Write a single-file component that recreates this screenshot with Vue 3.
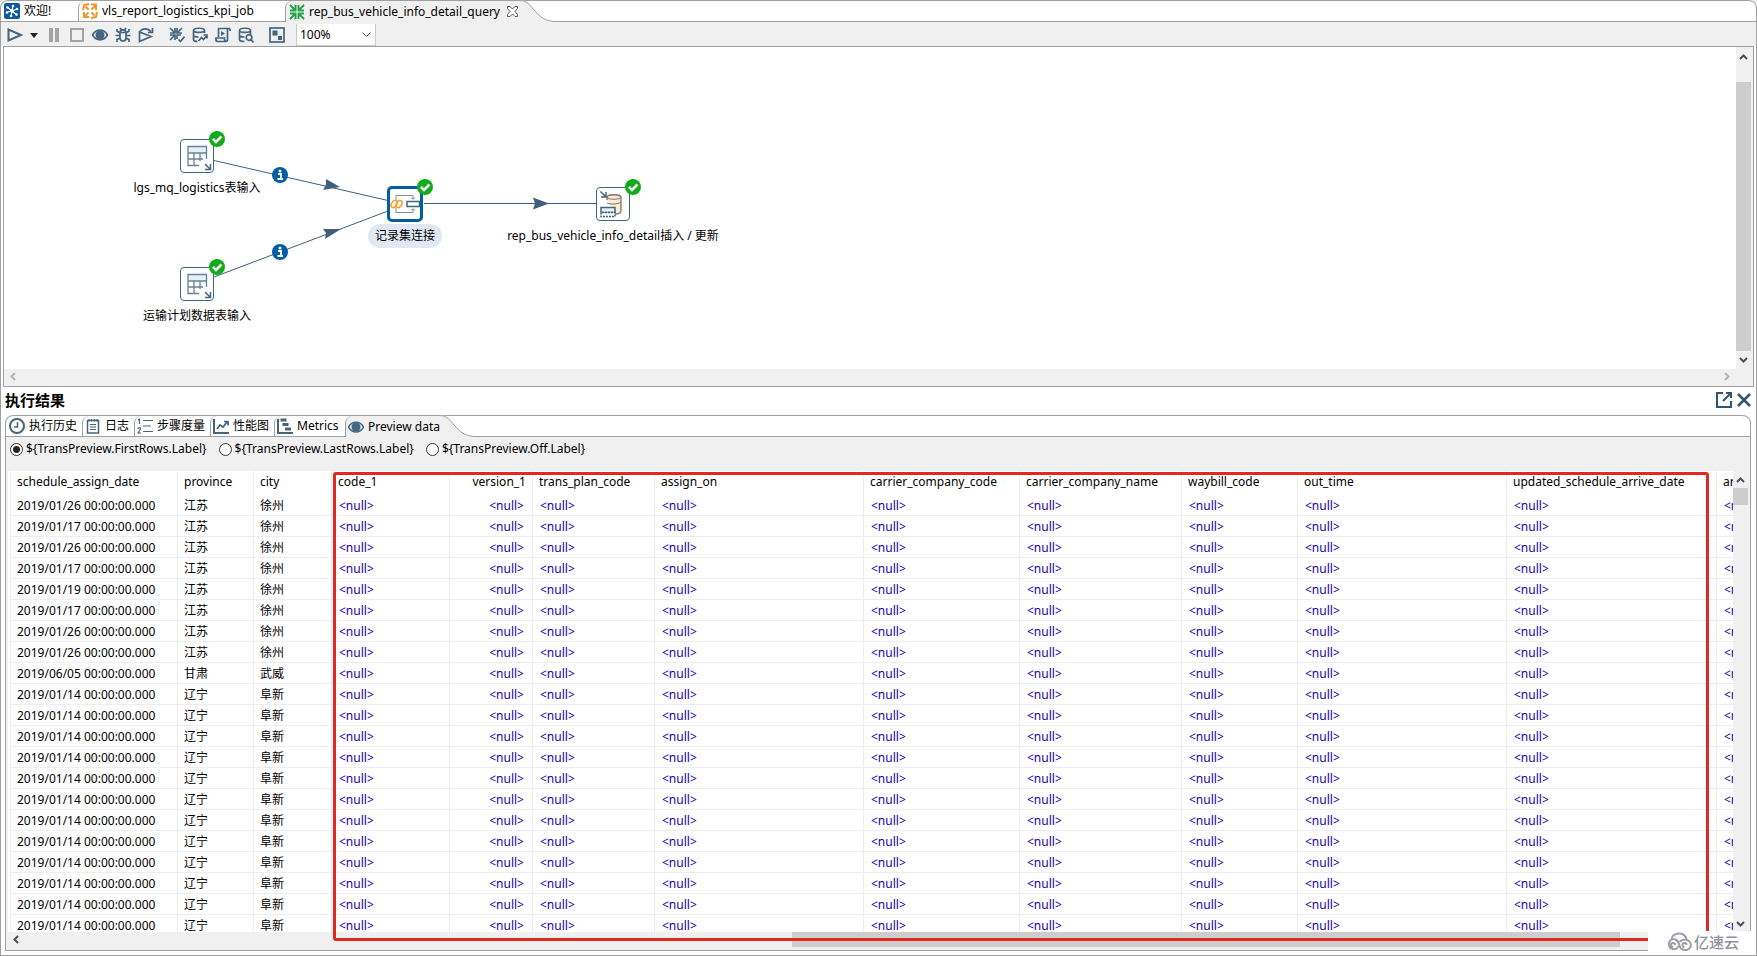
<script setup>
import { ref } from 'vue'

const zoomLevel = ref('100%')
const sampling = ref('first')

const tools = [
  { id: 'pause', label: 'Pause' },
  { id: 'stop', label: 'Stop' },
  { id: 'eye', label: 'Preview' },
  { id: 'bug', label: 'Debug' },
  { id: 'replay', label: 'Replay' },
  { id: 'verify', label: 'Verify', gap: true },
  { id: 'impact', label: 'Impact' },
  { id: 'sql', label: 'SQL' },
  { id: 'explore', label: 'Explore database' },
  { id: 'results', label: 'Show results', gap: true }
]

const nodes = [
  { id: 'a', kind: 'table', x: 176, y: 92, label: 'lgs_mq_logistics表输入' },
  { id: 'b', kind: 'table', x: 176, y: 220, label: '运输计划数据表输入' },
  { id: 'c', kind: 'merge', x: 384, y: 140, label: '记录集连接', selected: true },
  { id: 'd', kind: 'upsert', x: 592, y: 140, label: 'rep_bus_vehicle_info_detail插入 / 更新' }
]

const resultTabs = [
  { id: 'history', label: '执行历史' },
  { id: 'log', label: '日志' },
  { id: 'steps', label: '步骤度量' },
  { id: 'perf', label: '性能图' },
  { id: 'metrics', label: 'Metrics' }
]

const samplings = [
  { id: 'first', label: '${TransPreview.FirstRows.Label}' },
  { id: 'last', label: '${TransPreview.LastRows.Label}' },
  { id: 'off', label: '${TransPreview.Off.Label}' }
]

const columns = [
  { name: 'schedule_assign_date', w: 167 },
  { name: 'province', w: 76 },
  { name: 'city', w: 78 },
  { name: 'code_1', w: 118 },
  { name: 'version_1', w: 83, right: true },
  { name: 'trans_plan_code', w: 122 },
  { name: 'assign_on', w: 209 },
  { name: 'carrier_company_code', w: 156 },
  { name: 'carrier_company_name', w: 162 },
  { name: 'waybill_code', w: 116 },
  { name: 'out_time', w: 209 },
  { name: 'updated_schedule_arrive_date', w: 210 },
  { name: 'arrive_time', w: 160 }
]

const xuzhou = ['2019/01/26', '2019/01/17', '2019/01/26', '2019/01/17', '2019/01/19', '2019/01/17', '2019/01/26', '2019/01/26']
const rows = [
  ...xuzhou.map((d) => [d, '江苏', '徐州']),
  ['2019/06/05', '甘肃', '武威'],
  ...Array.from({ length: 12 }, () => ['2019/01/14', '辽宁', '阜新'])
].map(([d, p, c]) => [d + ' 00:00:00.000', p, c])
</script>

<template>
  <div class="app">
    <div class="strip" role="tablist">
      <div class="tab first wel">
        <button role="tab" class="tabbtn">
          <svg width="16" height="16" viewBox="0 0 16 16">
            <rect width="16" height="16" rx="2" fill="#0d5aa0" />
            <path d="M3 4l10 8M9 2.500L7 13.500M2.500 9.500L13.500 6" stroke="#fff" stroke-width="1.200" />
            <g fill="#fff"><circle cx="3.500" cy="4.500" r="1.300" /><circle cx="9" cy="3" r="1.300" /><circle cx="13" cy="6" r="1.300" /><circle cx="12.500" cy="11.500" r="1.300" /><circle cx="7" cy="13" r="1.300" /><circle cx="3" cy="9.500" r="1.300" /><circle cx="8" cy="8" r="1.800" /></g>
          </svg>
          欢迎!
        </button>
      </div>
      <div class="tab job">
        <button role="tab" class="tabbtn">
          <svg width="16" height="16" viewBox="0 0 16 16" fill="none" stroke="#f0962a" stroke-width="2">
            <path d="M6.500 6.500L3.500 3.500M1 7l1-5 5-1M9 1.500h5V7M9.500 6.500l4-4M6.500 9.500l-4 4M2 9v5h5M9.500 9.500l3 3M15 9l-1 5-5 1" />
          </svg>
          vls_report_logistics_kpi_job
        </button>
      </div>
      <div class="tab active">
        <button role="tab" class="tabbtn" aria-selected="true">
          <svg width="16" height="16" viewBox="0 0 16 16" fill="none" stroke="#25a54a" stroke-width="2">
            <path d="M1 1l5 5M1 6.500h5.500V1M15 1l-5 5M15 6.500H9.500V1M1 15l5-5M1 9.500h5.500V15M15 15l-5-5M15 9.500H9.500V15" />
          </svg>
          rep_bus_vehicle_info_detail_query
        </button>
        <button class="close" aria-label="Close tab">
          <svg width="11" height="11" viewBox="0 0 11 11" fill="#fff" stroke="#555"><path d="M.5 .5h2.500L5.500 3 8 .5h2.500v2L8 5.500l2.500 3v2H8L5.500 8 3 10.500H.5v-2L3 5.500l-2.500-3z" /></svg>
        </button>
      </div>
      <svg class="swoop" width="36" height="22" viewBox="0 0 36 22"><path d="M0 0C14 0 14 21 36 21.500V22H0z" fill="#f0f0f0" /><path d="M0 .5C14 .5 14 21.500 36 21.500" fill="none" stroke="#a0a0a0" /></svg>
    </div>

    <div class="toolbar" role="toolbar">
      <button class="tool run" aria-label="Run"><svg width="16" height="16" viewBox="0 0 16 16" fill="none" stroke="#43657f" stroke-width="2"><path d="M1.500 2.500v11L14 8z" /></svg></button>
      <button class="drop" aria-label="Run options"><svg width="8" height="5" viewBox="0 0 8 5"><path d="M0 0h8L4 5z" fill="#222" /></svg></button>
      <button v-for="t in tools" :key="t.id" class="tool" :class="{ gap: t.gap }" :aria-label="t.label">
        <svg width="16" height="16" viewBox="0 0 16 16" fill="none" stroke="#43657f" stroke-width="1.700">
          <path v-if="t.id === 'pause'" d="M3 1h4v14H3zM9 1h4v14H9z" fill="#a3a3a3" stroke="none" />
          <rect v-else-if="t.id === 'stop'" x="2" y="2" width="12" height="12" stroke="#a3a3a3" stroke-width="2" />
          <g v-else-if="t.id === 'eye'"><path d="M.5 8C4 1.500 12 1.500 15.500 8 12 14.500 4 14.500 .5 8z" /><circle cx="8" cy="8" r="4.500" fill="#43657f" stroke="none" /></g>
          <g v-else-if="t.id === 'bug'"><path d="M5 5.500h6v5.500c0 4-6 4-6 0zM5 5.500c0-3.500 6-3.500 6 0M5 1l1.500 2M11 1L9.500 3M.5 8.500H5M11 8.500h4.500M5 6L2 4V2M11 6l3-2V2M5 11l-3 1.500V15M11 11l3 1.500V15" /></g>
          <g v-else-if="t.id === 'replay'"><path d="M1.500 5v9.500L13 9.500zM2 4c3-3 8-3 11 .5M14.500 1v4.500H10" /></g>
          <g v-else-if="t.id === 'verify'"><path d="M1 1l4.500 4.500M1 6h5V1M13 1L8.500 5.500M13 6H8V1M1 13l4.500-4.500M1 8h5v5M8 12V8h4M9.500 12.500l2 2 4-5" /></g>
          <g v-else-if="t.id === 'impact'"><path d="M12.500 6V3.500c0-3-11-3-11 0v9c0 1.500 2 2 4 2M1.500 3.500c0 2.500 11 2.500 11 0M1.500 8c0 1 2 2 5 2M6.500 14l3-3.500 2 2L15 8.500M11.500 8H15v3.500" /></g>
          <g v-else-if="t.id === 'sql'"><path d="M3.500 10V1.500h11.500M12.500 1.500v11c0 2.500-2.500 2.500-3 0V11H1v2c0 1 1 1.500 2 1.500h8M15 1.500V4" /><path d="M6 4v5l4-2.500z" fill="#43657f" stroke="none" /></g>
          <g v-else-if="t.id === 'explore'"><path d="M12.500 7V3.500c0-3-11-3-11 0v9c0 1.500 2 2 5 2M1.500 3.500c0 2.500 11 2.500 11 0M1.500 8c0 1 2 2 5 2" /><circle cx="11" cy="10.500" r="2.800" /><path d="M13 12.500l2.500 3" /></g>
          <g v-else><rect x="1" y="1" width="14" height="14" /><path d="M3.500 3.500h5v5h-5zM9 9h4v4H9z" fill="#43657f" stroke="none" /></g>
        </svg>
      </button>
      <select v-model="zoomLevel" class="zoom" aria-label="Zoom"><option>100%</option><option>75%</option></select>
    </div>

    <div class="canvasframe">
      <div class="canvas">
        <svg class="edges" width="740" height="320" viewBox="4 47 740 320">
          <g stroke="#3f5f7c" fill="none"><path d="M214 160.500L388 200.500M214 277L388 211M424 203.500h172" /></g>
          <g fill="#3f5f7c"><path d="M326 179l14 8-17 3 3-5z" /><path d="M341 229l-16 10 1-6-3-4z" /><path d="M533 197.500l16 6-16 6 2-6z" /></g>
          <g v-for="y in [175, 252]" :key="y"><circle cx="280" :cy="y" r="8" fill="#005da6" /><path :d="`M278 ${y - 1}h3v5M277.500 ${y + 4}h5.500`" stroke="#fff" stroke-width="2" fill="none" /><circle cx="280" :cy="y - 4" r="1.500" fill="#fff" /></g>
        </svg>
        <div v-for="n in nodes" :key="n.id" class="node" :class="{ selected: n.selected }" :style="{ left: n.x + 'px', top: n.y + 'px' }">
          <button class="box" :aria-label="n.label">
            <svg width="32" height="32" viewBox="0 0 32 32" fill="none" stroke="#43657f">
              <g v-if="n.kind === 'table'"><path d="M7 7h19v6H7z" fill="#e3f1fb" stroke="none" /><path d="M18 25.500H7v-19h18.500V19M7 13h18.500M7 19h15M13 13v12M19 13v8" stroke="#6c8095" stroke-width="1.300" /><path d="M24 24l5 5M29.500 24v5.500H24" stroke-width="1.500" /></g>
              <g v-else-if="n.kind === 'merge'"><path d="M7 12V7.500h17V11M22 9.500l2 2 2-2M7 20v4.500h17V21M22 22.500l2-2 2 2" stroke="#7c8ea0" /><ellipse cx="5" cy="16" rx="2.500" ry="4" transform="rotate(30 5 16)" stroke="#f59a23" stroke-width="1.500" /><ellipse cx="10" cy="16" rx="2.500" ry="4" transform="rotate(30 10 16)" stroke="#f59a23" stroke-width="1.500" /><path d="M7 16h2" stroke="#f59a23" /><path d="M18 13.500h12.500v5H18z" stroke-width="1.500" fill="#fff" /></g>
              <g v-else><path d="M10 12V9c0-3 14-3 14 0v14c0 2-3 3-6 3" fill="#fdebd3" stroke="#7b7470" stroke-width="1.300" /><path d="M10 9c0 3 14 3 14 0M10 15c3 1.500 11 1.500 14-1" stroke="#7b7470" /><path d="M4 19.500h14v5H4z" fill="#e3f1fb" stroke-width="1.500" /><path d="M4 24.500v4h14v-4z" fill="#fff" stroke-dasharray="2 1" stroke-width="1.500" /><path d="M3.500 3.500l5 5M9 4v5H4" stroke-width="1.500" /></g>
            </svg>
          </button>
          <svg class="ok" width="16" height="16" viewBox="0 0 16 16"><circle cx="8" cy="8" r="8" fill="#12ab1c" /><path d="M4 8l3 3 5.500-5.500" fill="none" stroke="#fff" stroke-width="2.500" /></svg>
          <span class="label">{{ n.label }}</span>
        </div>
      </div>
      <div class="vbar">
        <button class="arrow" aria-label="Scroll up"><svg width="9" height="6" viewBox="0 0 9 6"><path d="M1 5l3.500-3.500L8 5" /></svg></button>
        <div class="thumb"></div>
        <button class="arrow" aria-label="Scroll down"><svg width="9" height="6" viewBox="0 0 9 6"><path d="M1 1l3.500 3.500L8 1" /></svg></button>
      </div>
      <div class="hbar off">
        <button class="arrow" aria-label="Scroll left"><svg width="6" height="9" viewBox="0 0 6 9"><path d="M5 1L1.500 4.500 5 8" /></svg></button>
        <button class="arrow" aria-label="Scroll right"><svg width="6" height="9" viewBox="0 0 6 9"><path d="M1 1l3.500 3.500L1 8" /></svg></button>
      </div>
    </div>

    <div class="resulthead">
      <h2>执行结果</h2>
      <button aria-label="Maximize"><svg width="16" height="16" viewBox="0 0 16 16" fill="none" stroke="#2f5570" stroke-width="2"><path d="M7 1H1v14h14V9M7 9l7-7M10 1h5v5" /></svg></button>
      <button aria-label="Close results"><svg width="14" height="14" viewBox="0 0 14 14" fill="none" stroke="#2f5570" stroke-width="2.500"><path d="M1 1l12 12M13 1L1 13" /></svg></button>
    </div>

    <div class="results">
      <div class="strip" role="tablist">
        <div v-for="(t, i) in resultTabs" :key="t.id" class="tab" :class="['r-' + t.id, { first: i === 0 }]">
          <button role="tab" class="tabbtn">
            <svg width="16" height="16" viewBox="0 0 16 16" fill="none" stroke="#43657f" stroke-width="1.500">
              <g v-if="t.id === 'history'"><circle cx="8" cy="8" r="7" stroke-width="2" /><path d="M8.500 4v5H5" /></g>
              <g v-else-if="t.id === 'log'"><path d="M2.500 2.500h11v12.500h-11z" /><path d="M4 1v2.500M6.500 1v2.500M9.500 1v2.500M12 1v2.500M5 6.500h6M5 9h6M5 11.500h6" stroke-width="1.200" /></g>
              <g v-else-if="t.id === 'steps'"><path d="M6 2.500h10M6 8h8M6 13.500h10M1 2l1.500-1v5M1 11c0-2 3-1.500 2.500 0L1 15h3" stroke-width="1.200" /></g>
              <g v-else-if="t.id === 'perf'"><path d="M1 1v14h15" stroke-width="2" /><path d="M4 11l3-4 3 2 4-5M11 3.500h4v4" stroke-width="1.700" /></g>
              <g v-else><path d="M1 1v14h15" stroke-width="2" /><path d="M3.500 2h6M5.500 6.500h6M8 11h6" stroke-width="3" /></g>
            </svg>
            {{ t.label }}
          </button>
        </div>
        <div class="tab active">
          <button role="tab" class="tabbtn" aria-selected="true">
            <svg width="16" height="16" viewBox="0 0 16 16" fill="none" stroke="#43657f" stroke-width="1.500"><path d="M.5 8C4 1.500 12 1.500 15.500 8 12 14.500 4 14.500 .5 8z" /><circle cx="8" cy="8" r="4.500" fill="#43657f" stroke="none" /></svg>
            Preview data
          </button>
        </div>
        <svg class="swoop" width="36" height="22" viewBox="0 0 36 22"><path d="M0 0C14 0 14 21 36 21.500V22H0z" fill="#f0f0f0" /><path d="M0 .5C14 .5 14 21.500 36 21.500" fill="none" stroke="#a0a0a0" /></svg>
      </div>

      <div class="radios">
        <label v-for="s in samplings" :key="s.id"><input v-model="sampling" type="radio" name="sampling" :value="s.id" />{{ s.label }}</label>
      </div>

      <div class="gridpane">
        <div class="viewport">
          <table>
            <colgroup><col v-for="c in columns" :key="c.name" :style="{ width: c.w + 'px' }" /></colgroup>
            <thead><tr><th v-for="c in columns" :key="c.name" :class="{ right: c.right }">{{ c.name }}</th></tr></thead>
            <tbody>
              <tr v-for="(r, i) in rows" :key="i">
                <td v-for="(c, j) in columns" :key="c.name" :class="{ right: c.right, nil: j > 2 }">{{ j > 2 ? '<null>' : r[j] }}</td>
              </tr>
            </tbody>
          </table>
        </div>
        <div class="vbar">
          <button class="arrow" aria-label="Scroll rows up"><svg width="9" height="6" viewBox="0 0 9 6"><path d="M1 5l3.500-3.500L8 5" /></svg></button>
          <div class="thumb"></div>
          <button class="arrow" aria-label="Scroll rows down"><svg width="9" height="6" viewBox="0 0 9 6"><path d="M1 1l3.500 3.500L8 1" /></svg></button>
        </div>
        <div class="hbar">
          <button class="arrow" aria-label="Scroll columns left"><svg width="6" height="9" viewBox="0 0 6 9"><path d="M5 1L1.500 4.500 5 8" /></svg></button>
          <div class="track"><div class="thumb"></div></div>
        </div>
        <div class="highlight"></div>
      </div>
    </div>

    <div class="brand">
      <svg width="26" height="20" viewBox="0 0 26 20" fill="none" stroke="#9a9ca6" stroke-width="2"><path d="M12.500 14a5 5 0 1 1-3-6.500c2 1 3.500 3.500 4 6 .8 3 3 4.500 5.500 4.500a5 5 0 0 0 1.500-10C20 4 17 1.500 13 1.500S6 4 5.500 7M9 13a2 2 0 1 0-2 2M14 10c1-2 3-2.500 5-2M20.500 13a2 2 0 1 0-2 2" /></svg>
      <span>亿速云</span>
    </div>
  </div>
</template>

<style>
body { background: #f0f0f0; }
</style>

<style scoped>
.app {
  position: relative;
  box-sizing: border-box;
  height: 100vh;
  display: flex;
  flex-direction: column;
  overflow: hidden;
  background: #fff;
  border: 1px solid #a0a0a0;
  border-top: 0;
  border-radius: 8px 8px 0 0;
  font: 12px/16px "Noto Sans", "Noto Sans CJK SC", sans-serif;
  color: #000;
}
button { border: 0; padding: 0; margin: 0; background: none; font: inherit; color: inherit; }
svg { display: block; flex: none; }

.strip {
  display: flex;
  flex: none;
  box-sizing: border-box;
  height: 22px;
  border: 1px solid #a0a0a0;
  border-width: 1px 0;
  border-radius: 8px 8px 0 0;
  background: #fff;
}
.tab {
  display: flex;
  align-items: center;
  box-sizing: border-box;
  height: 20px;
  padding-left: 3px;
  border-left: 1px solid #a0a0a0;
  border-top-left-radius: 7px;
  white-space: nowrap;
}
.tab.first { border-left-color: transparent; }
.tabbtn { display: flex; align-items: center; gap: 4px; }
.tab.active { height: 21px; background: #f0f0f0; }
.wel { width: 77px; padding-left: 2px; }
.job { width: 207px; }
.close { margin: 0 2px 0 7px; }
.swoop { margin-top: -1px; }
.results .tab { padding-left: 2px; }
.r-history { width: 76px; }
.r-log { width: 52px; }
.r-steps { width: 76px; }
.r-perf { width: 64px; }
.r-metrics { width: 71px; }

.toolbar {
  display: flex;
  flex: none;
  align-items: center;
  box-sizing: border-box;
  height: 24px;
  padding: 2px 0 0 6px;
  background: #f0f0f0;
}
.tool { margin-right: 7px; }
.drop { margin-right: 8px; }
.tool.gap { margin-left: 8px; }
.zoom {
  appearance: none;
  box-sizing: border-box;
  width: 80px;
  height: 22px;
  margin-left: 4px;
  padding: 0 3px;
  border: 1px solid #c8c8c8;
  border-width: 0 1px 1px;
  border-radius: 0;
  color: #000;
  font: inherit;
  background: #fff url("data:image/svg+xml,%3Csvg xmlns='http://www.w3.org/2000/svg' width='9' height='6'%3E%3Cpath d='M.5 .5l4 4 4-4' fill='none' stroke='%23444'/%3E%3C/svg%3E") no-repeat right 4px center;
}

.canvasframe {
  display: grid;
  flex: none;
  grid-template: 322px 17px / 1fr 17px;
  margin: 0 2px;
  border: 1px solid #a0a0a0;
  background: #f0f0f0;
}
.canvas { position: relative; overflow: hidden; background: #fff; }
.edges { position: absolute; left: 0; top: 0; }
.node { position: absolute; width: 34px; }
.box {
  display: flex;
  align-items: center;
  justify-content: center;
  box-sizing: border-box;
  width: 34px;
  height: 34px;
  border: 1px solid #43657f;
  border-radius: 4px;
  background: #fff;
}
.selected .box { width: 36px; height: 36px; margin: -1px; border: 3px solid #005da6; border-radius: 5px; }
.ok { position: absolute; left: 29px; top: -8px; }
.label {
  position: absolute;
  left: 50%;
  top: 37px;
  padding: 4px 7px;
  border-radius: 12px;
  white-space: nowrap;
  transform: translateX(-50%);
}
.selected .label { background: #e1e8f4; }

.vbar { display: flex; flex-direction: column; align-items: center; background: #f0f0f0; }
.hbar { display: flex; align-items: flex-start; background: #f0f0f0; }
.arrow { display: flex; align-items: center; justify-content: center; width: 15px; height: 17px; }
.hbar .arrow { height: 15px; }
.arrow path { fill: none; stroke: #505050; stroke-width: 2; }
.off { justify-content: space-between; padding: 0 2px 0 1px; }
.off .arrow path { stroke: #b5b5b5; }
.thumb { background: #cdcdcd; }
.canvasframe .vbar { padding: 1px 2px 1px 0; }
.canvasframe .vbar .thumb { flex: 1; width: 15px; margin-top: 17px; }

.resulthead { display: flex; flex: none; align-items: center; box-sizing: border-box; height: 28px; padding: 0 5px 2px 4px; gap: 5px; }
.resulthead h2 { flex: 1; margin: 0; font-size: 15px; line-height: 20px; font-weight: 700; }

.results {
  display: flex;
  flex: 1;
  flex-direction: column;
  min-height: 0;
  margin: 0 5px 4px 4px;
  border: 1px solid #a0a0a0;
  border-top: 0;
  border-radius: 8px 8px 0 0;
  background: #f0f0f0;
}
.radios { display: flex; flex: none; align-items: center; gap: 12px; height: 24px; padding-left: 4px; margin-bottom: 10px; }
.radios label { display: flex; align-items: center; gap: 3px; }
.radios input {
  appearance: none;
  box-sizing: border-box;
  width: 13px;
  height: 13px;
  margin: 0;
  border: 1px solid #333;
  border-radius: 50%;
  background: #fff;
}
.radios input:checked { background: radial-gradient(circle, #222 0 3px, #fff 4px); }

.gridpane {
  position: relative;
  display: grid;
  flex: 1;
  min-height: 0;
  grid-template: minmax(0, 1fr) 18px / minmax(0, 1fr) 17px;
  margin-left: 2px;
}
.viewport { overflow: hidden; background: #fff; padding-left: 2px; }
table { width: 1866px; table-layout: fixed; border-collapse: separate; border-spacing: 0; }
th, td {
  box-sizing: border-box;
  overflow: hidden;
  border-left: 1px solid #ececf2;
  font-weight: 400;
  text-align: left;
  white-space: nowrap;
}
th { height: 24px; padding: 0 6px 2px; line-height: 20px; }
td { height: 21px; padding: 2px 6px 0; border-bottom: 1px solid #ececf2; line-height: 18px; }
.nil { padding: 2px 8px 0 7px; color: #1a00b0; }
.right { text-align: right; }
.gridpane .vbar { padding-right: 2px; }
.gridpane .vbar .thumb { width: 15px; height: 17px; margin-bottom: auto; }
.gridpane .hbar { grid-column: 1 / -1; }
.track { flex: 1; display: flex; height: 15px; }
.track .thumb { width: 48%; margin-left: 44.5%; }
.highlight { position: absolute; inset: 1px 41px 9px 325px; border: 3px solid #e02a20; border-radius: 3px; }

.brand {
  position: absolute;
  right: -1px;
  bottom: -1px;
  display: flex;
  align-items: center;
  gap: 2px;
  box-sizing: border-box;
  width: 109px;
  height: 25px;
  padding: 0 0 3px 18px;
  background: #fff;
  color: #8f919b;
  font-size: 15px;
  font-weight: 500;
}
</style>
